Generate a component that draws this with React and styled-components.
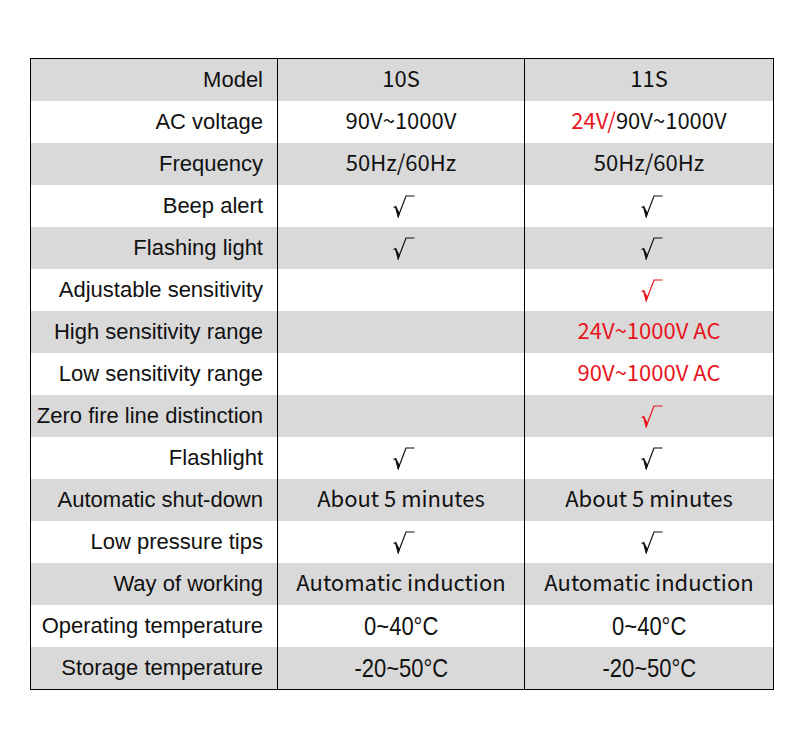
import React from "react";
import styled, { createGlobalStyle } from "styled-components";

const Global = createGlobalStyle`
  html, body { margin: 0; padding: 0; background: #fff; }
  body { width: 800px; height: 729px; }
`;

const Page = styled.div`
  padding: 58px 0 0 30px;
`;

const Table = styled.div`
  width: 742px;
  border: 1px solid #000;
  display: grid;
  grid-template-columns: 246px 1px 246px 1px 248px;
`;

const Row = styled.div`
  display: contents;
`;

const Label = styled.div`
  height: 42px;
  background: ${(p) => (p.$gray ? "#d9d9d9" : "#fff")};
  display: flex;
  align-items: center;
  justify-content: flex-end;
  padding-right: 14px;
  font-family: "Liberation Sans", Arial, sans-serif;
  font-size: 22px;
  color: #111;
  white-space: nowrap;
`;

const Divider = styled.div`
  background: #000;
`;

const Cell = styled.div`
  box-sizing: border-box;
  height: 42px;
  padding-bottom: 6px;
  background: ${(p) => (p.$gray ? "#d9d9d9" : "#fff")};
  display: flex;
  align-items: center;
  justify-content: center;
  font-family: "Noto Sans CJK SC", "Noto Sans", sans-serif;
  font-size: 22px;
  color: ${(p) => (p.$red ? "#e8141b" : "#111")};
  white-space: nowrap;
`;

const Red = styled.span`
  color: #e8141b;
`;

const Narrow = styled.span`
  display: inline-block;
  margin-top: 6px;
  font-family: "Liberation Sans", Arial, sans-serif;
  font-size: 25px;
  transform: scaleX(0.88);
`;

const CheckSvg = styled.svg`
  margin-top: 7px;
  margin-left: 6px;
`;

const Check = ({ red }) => {
  const c = red ? "#e8141b" : "#111";
  return (
    <CheckSvg width="22" height="23" viewBox="0 0 22 23">
      <path d="M0.5 12.5 L2.6 11.6 L5.2 21.5 L13 1 L21.5 1" fill="none" stroke={c} strokeWidth="1.2" />
      <path d="M2.6 11.6 L5.2 21.5 L6.3 18.6 Z" fill={c} stroke={c} strokeWidth="1.1" />
    </CheckSvg>
  );
};

const rows = [
  ["Model", "10S", "11S"],
  ["AC voltage", "90V~1000V", <><Red>24V/</Red>90V~1000V</>],
  ["Frequency", "50Hz/60Hz", "50Hz/60Hz"],
  ["Beep alert", "check", "check"],
  ["Flashing light", "check", "check"],
  ["Adjustable sensitivity", "", "redcheck"],
  ["High sensitivity range", "", "red:24V~1000V AC"],
  ["Low sensitivity range", "", "red:90V~1000V AC"],
  ["Zero fire line distinction", "", "redcheck"],
  ["Flashlight", "check", "check"],
  ["Automatic shut-down", "About 5 minutes", "About 5 minutes"],
  ["Low pressure tips", "check", "check"],
  ["Way of working", "Automatic induction", "Automatic induction"],
  ["Operating temperature", "temp:0~40°C", "temp:0~40°C"],
  ["Storage temperature", "temp:-20~50°C", "temp:-20~50°C"],
];

function renderValue(v, gray, key) {
  if (v === "check") return <Cell key={key} $gray={gray}><Check /></Cell>;
  if (v === "redcheck") return <Cell key={key} $gray={gray}><Check red /></Cell>;
  if (typeof v === "string" && v.startsWith("red:"))
    return <Cell key={key} $gray={gray} $red>{v.slice(4)}</Cell>;
  if (typeof v === "string" && v.startsWith("temp:"))
    return <Cell key={key} $gray={gray}><Narrow>{v.slice(5)}</Narrow></Cell>;
  return <Cell key={key} $gray={gray}>{v}</Cell>;
}

export default function App() {
  return (
    <>
      <Global />
      <Page>
        <Table>
          {rows.map((r, i) => {
            const gray = i % 2 === 0;
            return (
              <Row key={i}>
                <Label $gray={gray}>{r[0]}</Label>
                <Divider />
                {renderValue(r[1], gray, "a")}
                <Divider />
                {renderValue(r[2], gray, "b")}
              </Row>
            );
          })}
        </Table>
      </Page>
    </>
  );
}
